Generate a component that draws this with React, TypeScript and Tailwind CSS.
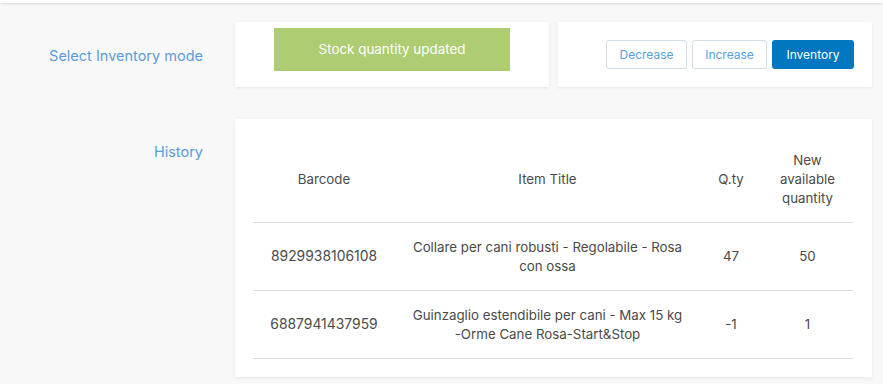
const rows = [
  {
    barcode: "8929938106108",
    title: ["Collare per cani robusti - Regolabile - Rosa con ossa"],
    qty: "47",
    available: "50",
  },
  {
    barcode: "6887941437959",
    title: ["Guinzaglio estendibile per cani - Max 15 kg ", "-Orme", " Cane Rosa-Start&Stop"],
    qty: "-1",
    available: "1",
  },
];

export default function App() {
  return (
    <div className="h-[384px] w-full overflow-hidden bg-[#f8f8f8] font-['Inter','Liberation_Sans',sans-serif] text-[13px]">
      <div className="h-[3px] bg-white shadow-[0_1px_3px_rgba(0,0,0,0.12)]" />

      {/* mode row */}
      <div className="mt-[19px] flex items-center">
        <div className="w-[235px] pr-[32px] pt-[2px] text-right text-[14.5px] text-[#5b9bd8]">
          Select Inventory mode
        </div>
        <div className="flex h-[65px] w-[314px] justify-center bg-white pt-[6px] shadow-[0_1px_3px_rgba(0,0,0,0.08)]">
          <div className="flex h-[43px] w-[236px] items-center justify-center bg-[#aecd72] text-[13.4px] text-white">
            Stock quantity updated
          </div>
        </div>
        <div className="ml-[9px] flex h-[65px] w-[314px] items-center justify-end gap-[5px] bg-white pr-[18px] shadow-[0_1px_3px_rgba(0,0,0,0.08)]">
          <button className="h-[29px] w-[81px] rounded-[3px] border border-[#d3dde6] text-[12px] text-[#5aa0d8]">
            Decrease
          </button>
          <button className="h-[29px] w-[75px] rounded-[3px] border border-[#d3dde6] text-[12px] text-[#5aa0d8]">
            Increase
          </button>
          <button className="h-[29px] w-[82px] rounded-[3px] bg-[#0077c0] text-[12px] text-white">
            Inventory
          </button>
        </div>
      </div>

      {/* history row */}
      <div className="mt-[32px] flex items-start">
        <div className="w-[235px] pr-[32px] pt-[22px] text-right text-[14.5px] text-[#5b9bd8]">
          History
        </div>
        <div className="w-[637px] bg-white pb-[18px] pl-[18px] pr-[19px] pt-[18px] shadow-[0_1px_3px_rgba(0,0,0,0.08)]">
          <table className="w-[600px] table-fixed border-collapse text-center text-[13.3px] leading-[19px] text-[#4a4a4a]">
            <colgroup>
              <col className="w-[142px]" />
              <col className="w-[305px]" />
              <col className="w-[62px]" />
              <col className="w-[91px]" />
            </colgroup>
            <thead>
              <tr className="border-b border-[#dedede]">
                <th className="px-2 pb-[14px] pt-[14px] font-normal">Barcode</th>
                <th className="px-4 pb-[14px] pt-[14px] font-normal">Item Title</th>
                <th className="pb-[14px] pt-[14px] font-normal">Q.ty</th>
                <th className="px-[14px] pb-[14px] pt-[14px] font-normal">New available quantity</th>
              </tr>
            </thead>
            <tbody>
              {rows.map((r) => (
                <tr key={r.barcode} className="h-[68px] border-b border-[#dedede]">
                  <td className="px-2 text-[13.9px]">{r.barcode}</td>
                  <td className="px-[16px]">
                    {r.title.map((t, i) =>
                      i === 1 ? (
                        <span key={i} className="whitespace-nowrap">
                          {t}
                        </span>
                      ) : (
                        <span key={i}>{t}</span>
                      )
                    )}
                  </td>
                  <td>{r.qty}</td>
                  <td>{r.available}</td>
                </tr>
              ))}
            </tbody>
          </table>
        </div>
      </div>
    </div>
  );
}
